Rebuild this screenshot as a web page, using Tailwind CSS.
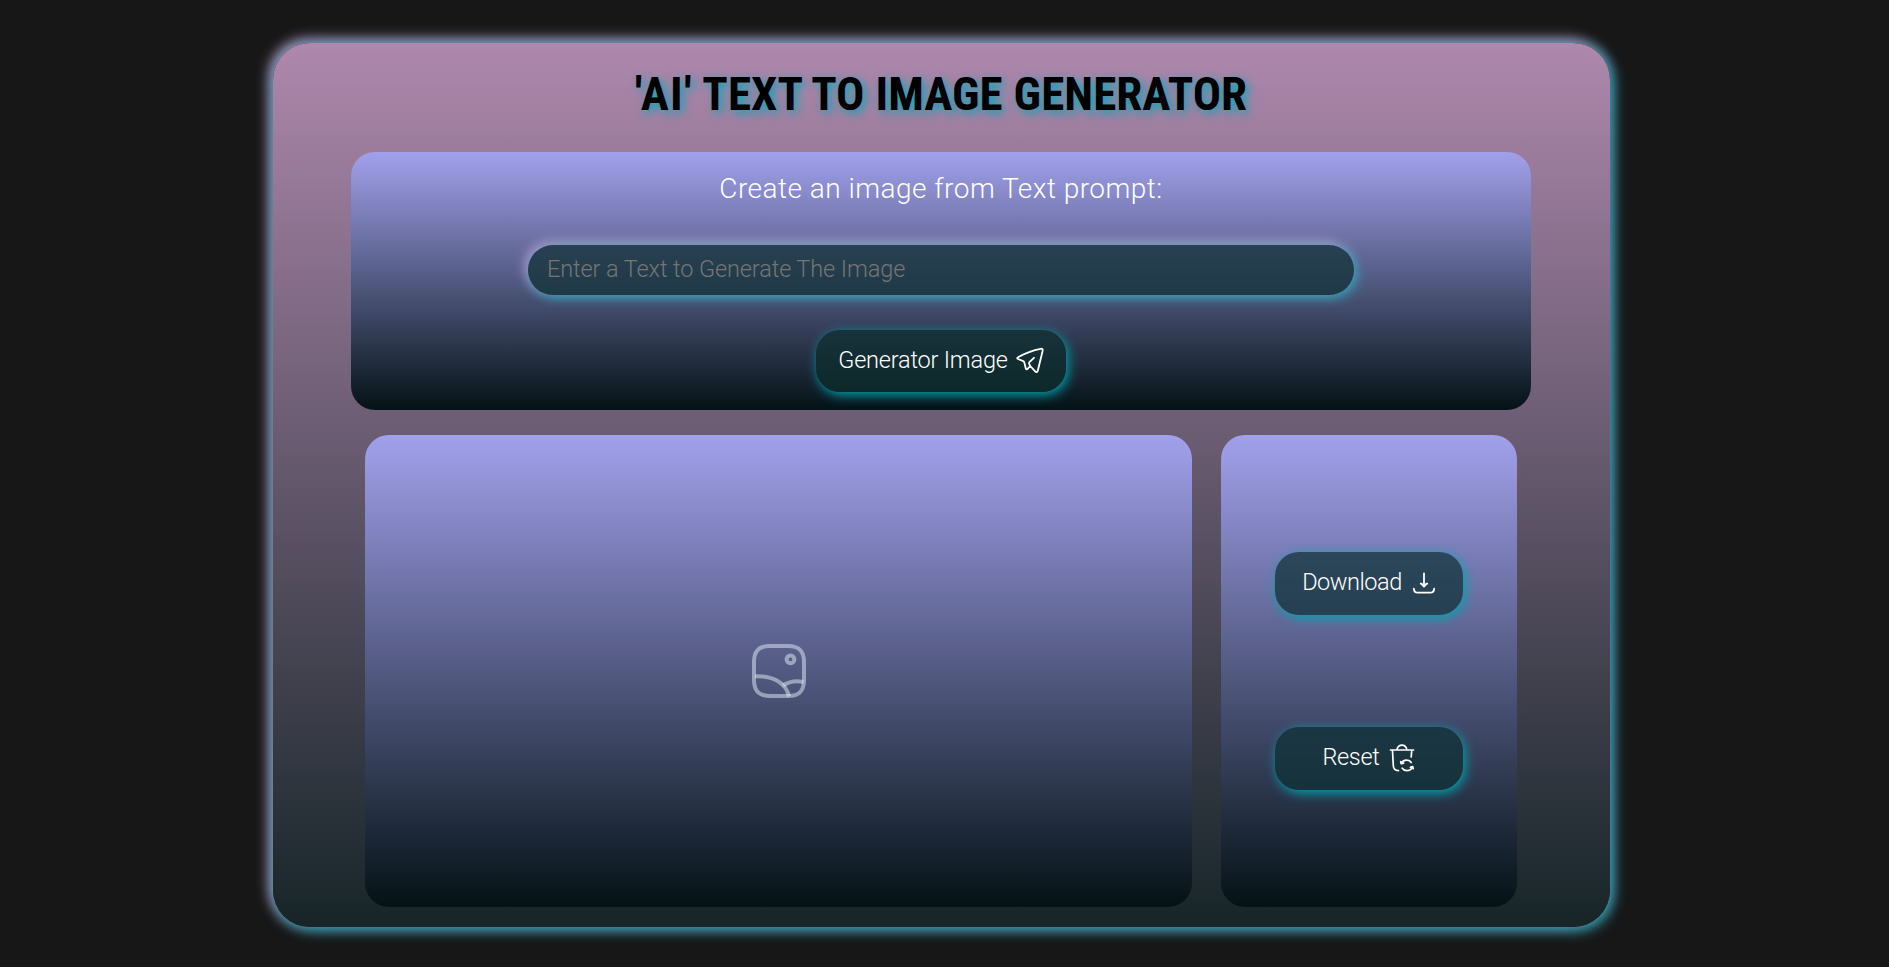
<!DOCTYPE html>
<html lang="en">
<head>
<meta charset="utf-8">
<title>AI Text to Image Generator</title>
<script src="https://cdn.jsdelivr.net/npm/@tailwindcss/browser@4"></script>
</head>
<body class="h-screen overflow-hidden bg-[#171717] pt-[43px] font-['Roboto',sans-serif] font-light text-white">
<main class="mx-auto flex h-[884px] w-[1337px] translate-x-[-3px] flex-col items-center rounded-[37px] bg-linear-to-b/srgb from-[#ae88ad] to-[#162528] pr-px shadow-[3px_3px_13px_1px_#2a98aa,-3px_-3px_13px_1px_#b79cc9]">
  <h1 class="mt-[23px] h-[86px] text-[47px]/[56px] font-bold font-stretch-condensed tracking-[0.07px] whitespace-nowrap text-black [text-shadow:3px_3px_10px_#0aa5b5]"><span class="tracking-[1.2px]">'AI'</span> TEXT TO IMAGE GENERATOR</h1>

  <section class="flex h-[258px] w-[1180px] flex-col items-center rounded-3xl bg-linear-to-b/srgb from-[#a1a1ec] to-[#041216]">
    <h2 class="mt-[17px] text-[28px]/[40px] tracking-[0.48px] whitespace-nowrap">Create an image from Text prompt:</h2>
    <input type="text" placeholder="Enter a Text to Generate The Image" class="mt-[36px] h-[50px] w-[826px] rounded-full bg-[#103036]/73 px-[19px] pb-0.5 text-[23.5px] tracking-[-0.1px] shadow-[3px_3px_12px_#2aa0b5,-3px_-3px_12px_#b79cd0] outline-none placeholder:text-[#757575]">
    <button class="mt-[35px] flex h-[62px] w-[250px] items-center justify-center gap-2 rounded-[24px] bg-[#0d2e2e]/72 text-[23.5px] tracking-[-0.2px] whitespace-nowrap shadow-[2px_3px_12px_#00a5b0]">
      <span>Generator Image</span>
      <svg class="h-7 w-7" viewBox="0 0 28 28" fill="none" stroke="currentColor" stroke-width="1.8" stroke-linecap="round" stroke-linejoin="round"><path d="M2 10.2C1 10.7 1 11.6 2 12L7.3 14.2C8 14.5 8.2 15 8.4 15.7L9.8 21.5C10 22.5 11 22.6 11.6 21.9L14.2 19L19.2 24.4C20.2 25.5 21.4 25.2 21.8 23.8L26.6 4C27 2.3 26.3 1.5 24.6 1.8C16 3.4 8 6.8 2 10.2Z"/><path d="M18 10.8L13.4 15.2C12.8 15.8 12.9 16.5 13.3 17.2L14.2 19"/></svg>
    </button>
  </section>

  <div class="mt-[25px] flex h-[472px] gap-[29px]">
    <section class="flex w-[827px] items-center justify-center rounded-3xl bg-linear-to-b/srgb from-[#a1a1ec] to-[#041216]">
      <svg class="h-[54px] w-[54px] text-[#e1f0fa]/50" viewBox="0 0 54 54" fill="none" stroke="currentColor" stroke-width="4"><path d="M2 18C2 7 7 2 18 2H36C47 2 52 7 52 18V36C52 47 47 52 36 52H18C7 52 2 47 2 36Z"/><circle cx="38.5" cy="15.3" r="3.9"/><path d="M3 32.3C20 31.5 34 38 37 52.5"/><path d="M31 41.5C37 37.5 44 36.5 51.5 38"/></svg>
    </section>
    <section class="flex w-[296px] flex-col items-center rounded-3xl bg-linear-to-b/srgb from-[#a1a1ec] to-[#041216] pt-[117px]">
      <button class="flex h-[63px] w-[188px] items-center justify-center gap-2.5 rounded-[24px] bg-[#0e3036]/72 pb-0.5 text-[23.5px] tracking-[-0.45px] shadow-[2px_3px_12px_#00a5b0]">
        <span>Download</span>
        <svg class="h-6 w-6" viewBox="0 0 24 24" fill="none" stroke="currentColor" stroke-width="1.8" stroke-linecap="round" stroke-linejoin="round"><path d="M12 2.5V15.2"/><path d="M9 12.6Q10.6 13.5 12 15.4Q13.4 13.5 15 12.6" stroke-width="2.2"/><path d="M1.9 17.7C1.9 20.6 3 21.7 6 21.7H18C21 21.7 22.1 20.6 22.1 17.7"/></svg>
      </button>
      <button class="mt-[112px] flex h-[63px] w-[188px] items-center justify-center gap-2 rounded-[24px] bg-[#0e3036]/72 pb-0.5 text-[23.5px] tracking-[-0.3px] shadow-[2px_3px_12px_#00a5b0]">
        <span>Reset</span>
        <svg class="h-7 w-7" viewBox="0 0 28 28" fill="none" stroke="currentColor" stroke-width="1.7" stroke-linecap="round" stroke-linejoin="round"><path d="M2.5 6H25.5"/><path d="M9 5.5C9.6 3 11 1.2 14 1.2S18.2 3 18.8 5.5"/><path d="M4.5 6.5L5.3 21.5C5.5 25 7.2 26.6 10.5 26.6"/><path d="M23.7 6.5L23.2 13"/><path d="M13.4 19.2C14.4 17.2 16.6 16 19 16.2C20.8 16.3 22.3 17 23.2 18.5"/><path d="M12.7 17.5L13.3 19.7L15.6 19.2"/><path d="M24.5 22.8C23.5 25 21.5 26.6 19 26.6C16.9 26.6 15.2 25.7 14.2 24.2"/><path d="M25.2 24.7L24.6 22.6L22.4 23.2"/></svg>
      </button>
    </section>
  </div>
</main>
</body>
</html>
